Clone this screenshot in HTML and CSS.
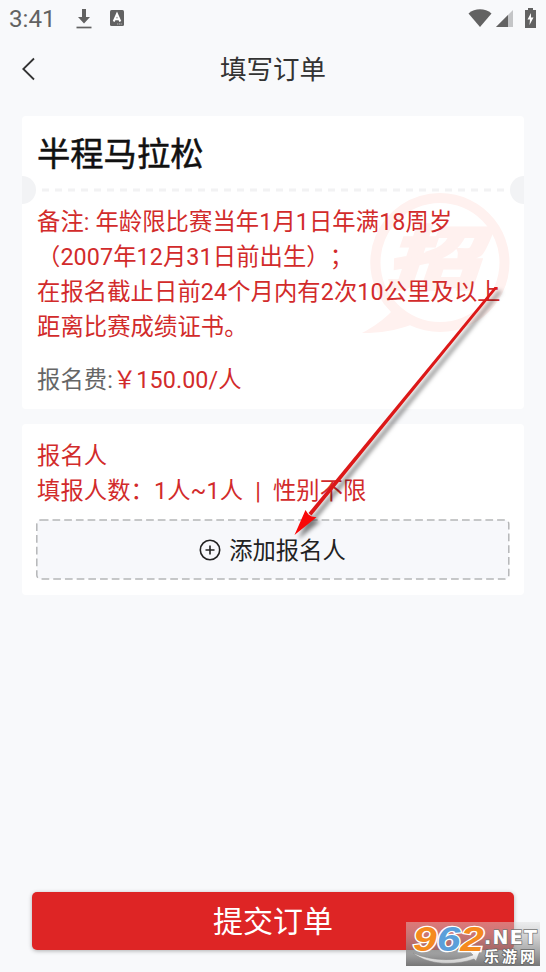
FILE: index.html
```html
<!DOCTYPE html>
<html lang="zh-CN">
<head>
<meta charset="utf-8">
<title>填写订单</title>
<link rel="stylesheet" href="styles.css">
</head>
<body>
<div class="screen">
  <header class="status">
    <span class="time">3:41</span>
    <svg class="st-download" width="16" height="22" viewBox="0 0 16 22"><path d="M6 0h4v8h4L8 14.500 2 8h4z" fill="#626262"/><path d="M.5 18.500h15" stroke="#626262" stroke-width="1.700"/></svg>
    <svg class="st-a" width="14" height="16" viewBox="0 0 14 16"><rect width="14" height="16" rx="1.500" fill="#626262"/><path d="M3.700 11.500 7 4l3.300 7.500M5 9.300h4" fill="none" stroke="#fff" stroke-width="2"/><path d="M7 14h5.500" stroke="#ccc" stroke-width=".8" stroke-dasharray="1.200 .6"/></svg>
    <span class="grow"></span>
    <svg class="st-wifi" width="24" height="20" viewBox="0 0 24 20"><path d="M.5 4.500C7-1.100 17-1.100 23.500 4.500L12 18z" fill="#626262"/></svg>
    <svg class="st-signal" width="17" height="18" viewBox="0 0 17 18"><path d="M17 0v17H0z" fill="#c4c5c7"/><path d="M12 5v12H0z" fill="#626262"/></svg>
    <svg class="st-battery" width="11" height="20" viewBox="0 0 11 20"><path d="M3 0h5v2h3v18H0V2h3z" fill="#626262"/><path d="M6 5 2.500 11.500H5L4.500 17 8.500 9.500H6z" fill="#fff"/></svg>
  </header>
  <nav class="nav">
    <svg class="back" width="14" height="24" viewBox="0 0 14 24"><path d="M12 1.500 1.300 12 12 22.500" fill="none" stroke="#333" stroke-width="1.800"/></svg>
    <h1>填写订单</h1>
  </nav>
  <main>
    <section class="card event">
      <svg class="seal" width="150" height="150" viewBox="360 190 150 150" fill="#fff1ef"><path fill-rule="evenodd" d="M440 193a69.500 69.500 0 1 1-30 132.200c-14 5-29 7.800-48 7.800 13-7 22-14 29-21A69.500 69.500 0 0 1 440 193zm0 10a59.500 59.500 0 1 0 0 119 59.500 59.500 0 0 0 0-119z"/><text class="seal-text" transform="translate(387 283)" textLength="92" lengthAdjust="spacingAndGlyphs">招</text></svg>
      <h2>半程马拉松</h2>
      <div class="divider"><i class="notch left"></i><svg width="462" height="4"><path d="M0 2h462" stroke="#f2f2f3" stroke-width="3" stroke-dasharray="7 6"/></svg><i class="notch right"></i></div>
      <p class="note">备注: 年龄限比赛当年1月1日年满18周岁<br>（2007年12月31日前出生）；<br>在报名截止日前24个月内有2次10公里及以上<br>距离比赛成绩证书。</p>
      <p class="fee">报名费:<span>￥150.00/人</span></p>
    </section>
    <section class="card people">
      <p class="red">报名人</p>
      <p class="red">填报人数：1人~1人<span class="bar">|</span>性别不限</p>
      <div class="add">
        <svg class="add-border" width="474" height="61"><rect x=".8" y="1" width="472" height="59" rx="4" fill="#f7f8fb" stroke="#b5b6b8" stroke-width="1.500" stroke-dasharray="7.700 4"/></svg>
        <svg class="plus" width="22" height="22" viewBox="0 0 22 22"><g fill="none" stroke="#222" stroke-width="1.600"><circle cx="11" cy="11" r="9.700"/><path d="M6.500 11h9M11 6.500v9"/></g></svg>
        <span>添加报名人</span>
      </div>
    </section>
  </main>
  <button class="submit">提交订单</button>
  <svg class="arrow" width="230" height="270" viewBox="285 280 230 270"><path d="M498 287 311.500 515.500l-3-2.500L494.500 287z" fill="#dc1818"/><path d="M294.500 535 305.500 510l3 4.500 3 2 5 .8z" fill="#f80808"/></svg>
  <div class="mark">
    <svg width="134" height="44" viewBox="0 0 134 44">
      <defs>
        <linearGradient id="plate" x1="0" y1="0" x2="0" y2="1"><stop offset="0" stop-color="#ddd" stop-opacity=".45"/><stop offset="1" stop-color="#555" stop-opacity=".8"/></linearGradient>
        <linearGradient id="swoosh" x1="0" y1="0" x2="0" y2="1"><stop offset="0" stop-color="#fff"/><stop offset="1" stop-color="#ccc"/></linearGradient>
      </defs>
      <rect width="134" height="44" fill="url(#plate)"/>
      <path d="M7 31c18 8 42 9 60 2l-3-3 10-1-4 10-2-2C48 44 22 43 7 31z" fill="url(#swoosh)" stroke="#888" stroke-width=".5"/>
      <text class="digits" x="7" y="28.500" textLength="71" lengthAdjust="spacingAndGlyphs"><tspan fill="#f58a1f">9</tspan><tspan fill="#5b9fda">6</tspan><tspan fill="#f58a1f">2</tspan></text>
      <text class="net" x="78" y="21.500" textLength="53">.NET</text>
      <text class="site" x="78" y="40" textLength="51">乐游网</text>
    </svg>
  </div>
</div>
</body>
</html>
```
FILE: styles.css
```css
*{box-sizing:border-box}
body{margin:0;background:#f8f9fb;font-family:Roboto,"Noto Sans CJK SC",sans-serif;color:#222}
.screen{position:relative;width:546px;height:972px;overflow:hidden;display:flex;flex-direction:column}
h1,h2,p{margin:0;font-weight:400}
svg{display:block;flex:none}
.status{height:38px;display:flex;align-items:flex-start;padding:9px 10px 0 9px}
.time{width:67px;font-size:24.200px;line-height:21px;color:#626262}
.st-a{margin:1px 0 0 18px}
.grow{flex:1}
.st-wifi{margin-right:0}
.st-signal{margin:1px 0 0 4px}
.st-battery{margin:-1px 0 0 12px}
.nav{height:78px;display:grid;grid-template-columns:82px 1fr 82px;padding-top:15px}
.back{margin:4px 0 0 22px}
h1{font-size:26.500px;line-height:34px;text-align:center;color:#333}
main{padding:0 22px;display:flex;flex-direction:column;gap:15px}
.card{position:relative;background:#fff;border-radius:4px;padding:0 15px}
.event{height:293px}
.people{height:171px;padding-top:15px}
h2{height:59px;font-size:33.300px;line-height:44px;padding-top:17px;color:#111;-webkit-text-stroke:.5px #111;position:relative}
.divider{position:relative;height:30px;margin:0 -15px;display:flex;align-items:center;justify-content:space-between;overflow:hidden}
.notch{width:28px;height:28px;border-radius:50%;background:#f2f3f5}
.left{margin-left:-14px}
.right{margin-right:-14px}
.note,.fee,.red{position:relative;font-size:23.300px;line-height:35px;color:#d22b2b;white-space:nowrap;text-spacing-trim:space-all;letter-spacing:.1px}
.fee{margin-top:18px;color:#666}
.fee span{color:#d22b2b}
.bar{margin:0 12px}
.seal{position:absolute;left:338px;top:74px;overflow:visible}
.seal-text{font:italic 700 68px "Noto Sans CJK SC",sans-serif;stroke:#fff1ef;stroke-width:4px}
.add{position:relative;height:61px;margin-top:10px;display:flex;align-items:center;justify-content:center;font-size:23.300px;gap:8px;padding-right:1px}
.add-border{position:absolute;left:-1px;top:0}
.plus,.add span{position:relative}
.add span{top:-1px}
.submit{margin:297px 32px 0;height:58px;border:0;border-radius:5px;background:#de2525;color:#fff;font:400 30px/59px Roboto,"Noto Sans CJK SC",sans-serif;padding:0;box-shadow:0 1px 4px rgba(0,0,0,.3)}
.arrow{position:absolute;left:285px;top:280px;filter:drop-shadow(4px 4px 2px rgba(0,0,0,.5))}
.mark{position:absolute;left:406px;top:922px}
.mark svg{overflow:visible}
.digits{font:italic 700 35px "Liberation Sans",sans-serif;stroke:#fff;stroke-width:2.500px;paint-order:stroke}
.net{font:700 19px "DejaVu Sans",sans-serif;fill:#fff;stroke:#777;stroke-width:1.500px;paint-order:stroke}
.site{font:700 15px "Noto Sans CJK SC",sans-serif;fill:#fff;stroke:#666;stroke-width:1.500px;paint-order:stroke}
```
